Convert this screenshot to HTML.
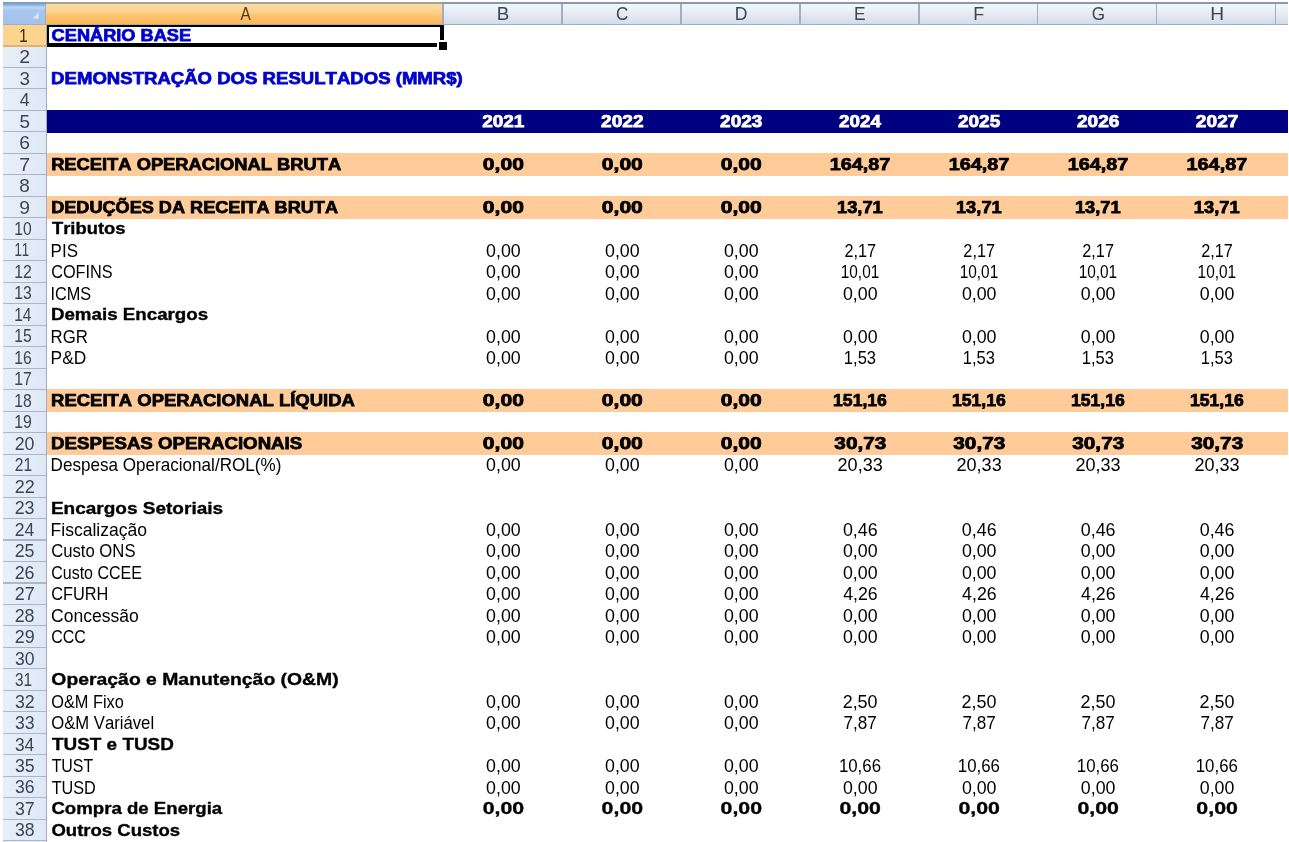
<!DOCTYPE html>
<html><head><meta charset="utf-8"><title>Planilha</title>
<style>
html,body{margin:0;padding:0;background:#fff;}
body{width:1289px;height:842px;position:relative;overflow:hidden;font-family:"Liberation Sans",sans-serif;}
.a{position:absolute;}
svg{position:absolute;left:0;top:0;}
text{font-family:"Liberation Sans",sans-serif;font-kerning:none;}
.B{font-weight:700;}
</style></head><body>

<div class="a" style="left:2.5px;top:1.8px;width:1285.5px;height:23.2px;background:#a3adc0"></div>
<div class="a" style="left:2.5px;top:1.8px;width:1285.5px;height:1.9px;background:#8799ab"></div>
<div class="a" style="left:2.8px;top:2.6px;width:42.7px;height:21px;background:linear-gradient(#6f9bd2 0%,#8fb5e6 10%,#b9d6f6 20%,#a8c7ef 36%,#a3c2ec 100%)"></div>
<svg width="1289" height="30" style="z-index:3"><path d="M38.6 12.2 L38.6 18.4 L32.6 18.4 Z" fill="#dbe7f6"/></svg>
<div class="a" style="left:46.4px;top:3.6px;width:396.10px;height:20.2px;background:linear-gradient(#f9dcab 0%,#fbd08a 40%,#fcc270 60%,#fbb858 100%)"></div>
<div class="a" style="left:443.70px;top:3.6px;width:117.75px;height:20.2px;background:linear-gradient(#ecf9fe 0%,#ebf0f7 30%,#e3e7f0 60%,#d4dcea 100%)"></div>
<div class="a" style="left:562.65px;top:3.6px;width:117.75px;height:20.2px;background:linear-gradient(#ecf9fe 0%,#ebf0f7 30%,#e3e7f0 60%,#d4dcea 100%)"></div>
<div class="a" style="left:681.60px;top:3.6px;width:117.75px;height:20.2px;background:linear-gradient(#ecf9fe 0%,#ebf0f7 30%,#e3e7f0 60%,#d4dcea 100%)"></div>
<div class="a" style="left:800.55px;top:3.6px;width:117.75px;height:20.2px;background:linear-gradient(#ecf9fe 0%,#ebf0f7 30%,#e3e7f0 60%,#d4dcea 100%)"></div>
<div class="a" style="left:919.50px;top:3.6px;width:117.75px;height:20.2px;background:linear-gradient(#ecf9fe 0%,#ebf0f7 30%,#e3e7f0 60%,#d4dcea 100%)"></div>
<div class="a" style="left:1038.45px;top:3.6px;width:117.75px;height:20.2px;background:linear-gradient(#ecf9fe 0%,#ebf0f7 30%,#e3e7f0 60%,#d4dcea 100%)"></div>
<div class="a" style="left:1157.40px;top:3.6px;width:117.75px;height:20.2px;background:linear-gradient(#ecf9fe 0%,#ebf0f7 30%,#e3e7f0 60%,#d4dcea 100%)"></div>
<div class="a" style="left:1276.35px;top:3.6px;width:11.65px;height:20.2px;background:linear-gradient(#ecf9fe 0%,#ebf0f7 30%,#e3e7f0 60%,#d4dcea 100%)"></div>
<div class="a" style="left:46.4px;top:1.8px;width:396.10px;height:1.9px;background:#a7a292"></div>
<div class="a" style="left:2.5px;top:24.5px;width:44.6px;height:817.5px;background:#adb6c8"></div>
<div class="a" style="left:2.5px;top:25.05px;width:43.2px;height:20.38px;background:#fdd48e"></div>
<div class="a" style="left:2.5px;top:46.53px;width:43.2px;height:20.38px;background:linear-gradient(90deg,#e9eff9,#dfe8f6)"></div>
<div class="a" style="left:2.5px;top:68.01px;width:43.2px;height:20.38px;background:linear-gradient(90deg,#e9eff9,#dfe8f6)"></div>
<div class="a" style="left:2.5px;top:89.49px;width:43.2px;height:20.38px;background:linear-gradient(90deg,#e9eff9,#dfe8f6)"></div>
<div class="a" style="left:2.5px;top:110.97px;width:43.2px;height:20.38px;background:linear-gradient(90deg,#e9eff9,#dfe8f6)"></div>
<div class="a" style="left:2.5px;top:132.45px;width:43.2px;height:20.38px;background:linear-gradient(90deg,#e9eff9,#dfe8f6)"></div>
<div class="a" style="left:2.5px;top:153.93px;width:43.2px;height:20.38px;background:linear-gradient(90deg,#e9eff9,#dfe8f6)"></div>
<div class="a" style="left:2.5px;top:175.41px;width:43.2px;height:20.38px;background:linear-gradient(90deg,#e9eff9,#dfe8f6)"></div>
<div class="a" style="left:2.5px;top:196.89px;width:43.2px;height:20.38px;background:linear-gradient(90deg,#e9eff9,#dfe8f6)"></div>
<div class="a" style="left:2.5px;top:218.37px;width:43.2px;height:20.38px;background:linear-gradient(90deg,#e9eff9,#dfe8f6)"></div>
<div class="a" style="left:2.5px;top:239.85px;width:43.2px;height:20.38px;background:linear-gradient(90deg,#e9eff9,#dfe8f6)"></div>
<div class="a" style="left:2.5px;top:261.33px;width:43.2px;height:20.38px;background:linear-gradient(90deg,#e9eff9,#dfe8f6)"></div>
<div class="a" style="left:2.5px;top:282.81px;width:43.2px;height:20.38px;background:linear-gradient(90deg,#e9eff9,#dfe8f6)"></div>
<div class="a" style="left:2.5px;top:304.29px;width:43.2px;height:20.38px;background:linear-gradient(90deg,#e9eff9,#dfe8f6)"></div>
<div class="a" style="left:2.5px;top:325.77px;width:43.2px;height:20.38px;background:linear-gradient(90deg,#e9eff9,#dfe8f6)"></div>
<div class="a" style="left:2.5px;top:347.25px;width:43.2px;height:20.38px;background:linear-gradient(90deg,#e9eff9,#dfe8f6)"></div>
<div class="a" style="left:2.5px;top:368.73px;width:43.2px;height:20.38px;background:linear-gradient(90deg,#e9eff9,#dfe8f6)"></div>
<div class="a" style="left:2.5px;top:390.21px;width:43.2px;height:20.38px;background:linear-gradient(90deg,#e9eff9,#dfe8f6)"></div>
<div class="a" style="left:2.5px;top:411.69px;width:43.2px;height:20.38px;background:linear-gradient(90deg,#e9eff9,#dfe8f6)"></div>
<div class="a" style="left:2.5px;top:433.17px;width:43.2px;height:20.38px;background:linear-gradient(90deg,#e9eff9,#dfe8f6)"></div>
<div class="a" style="left:2.5px;top:454.65px;width:43.2px;height:20.38px;background:linear-gradient(90deg,#e9eff9,#dfe8f6)"></div>
<div class="a" style="left:2.5px;top:476.13px;width:43.2px;height:20.38px;background:linear-gradient(90deg,#e9eff9,#dfe8f6)"></div>
<div class="a" style="left:2.5px;top:497.61px;width:43.2px;height:20.38px;background:linear-gradient(90deg,#e9eff9,#dfe8f6)"></div>
<div class="a" style="left:2.5px;top:519.09px;width:43.2px;height:20.38px;background:linear-gradient(90deg,#e9eff9,#dfe8f6)"></div>
<div class="a" style="left:2.5px;top:540.57px;width:43.2px;height:20.38px;background:linear-gradient(90deg,#e9eff9,#dfe8f6)"></div>
<div class="a" style="left:2.5px;top:562.05px;width:43.2px;height:20.38px;background:linear-gradient(90deg,#e9eff9,#dfe8f6)"></div>
<div class="a" style="left:2.5px;top:583.53px;width:43.2px;height:20.38px;background:linear-gradient(90deg,#e9eff9,#dfe8f6)"></div>
<div class="a" style="left:2.5px;top:605.01px;width:43.2px;height:20.38px;background:linear-gradient(90deg,#e9eff9,#dfe8f6)"></div>
<div class="a" style="left:2.5px;top:626.49px;width:43.2px;height:20.38px;background:linear-gradient(90deg,#e9eff9,#dfe8f6)"></div>
<div class="a" style="left:2.5px;top:647.97px;width:43.2px;height:20.38px;background:linear-gradient(90deg,#e9eff9,#dfe8f6)"></div>
<div class="a" style="left:2.5px;top:669.45px;width:43.2px;height:20.38px;background:linear-gradient(90deg,#e9eff9,#dfe8f6)"></div>
<div class="a" style="left:2.5px;top:690.93px;width:43.2px;height:20.38px;background:linear-gradient(90deg,#e9eff9,#dfe8f6)"></div>
<div class="a" style="left:2.5px;top:712.41px;width:43.2px;height:20.38px;background:linear-gradient(90deg,#e9eff9,#dfe8f6)"></div>
<div class="a" style="left:2.5px;top:733.89px;width:43.2px;height:20.38px;background:linear-gradient(90deg,#e9eff9,#dfe8f6)"></div>
<div class="a" style="left:2.5px;top:755.37px;width:43.2px;height:20.38px;background:linear-gradient(90deg,#e9eff9,#dfe8f6)"></div>
<div class="a" style="left:2.5px;top:776.85px;width:43.2px;height:20.38px;background:linear-gradient(90deg,#e9eff9,#dfe8f6)"></div>
<div class="a" style="left:2.5px;top:798.33px;width:43.2px;height:20.38px;background:linear-gradient(90deg,#e9eff9,#dfe8f6)"></div>
<div class="a" style="left:2.5px;top:819.81px;width:43.2px;height:20.38px;background:linear-gradient(90deg,#e9eff9,#dfe8f6)"></div>
<div class="a" style="left:2.5px;top:841.29px;width:43.2px;height:20.38px;background:linear-gradient(90deg,#e9eff9,#dfe8f6)"></div>
<div class="a" style="left:45.5px;top:24.5px;width:1.5px;height:817.5px;background:#a3aab9"></div>
<div class="a" style="left:2.5px;top:45.43px;width:43.2px;height:1.1px;background:#e2b273"></div>
<div class="a" style="left:46.9px;top:109.52px;width:1243px;height:23.13px;background:#000080"></div>
<div class="a" style="left:46.9px;top:152.58px;width:1243px;height:23.08px;background:#ffcc99"></div>
<div class="a" style="left:46.9px;top:195.54px;width:1243px;height:23.08px;background:#ffcc99"></div>
<div class="a" style="left:46.9px;top:388.86px;width:1243px;height:23.08px;background:#ffcc99"></div>
<div class="a" style="left:46.9px;top:431.82px;width:1243px;height:23.08px;background:#ffcc99"></div>
<div class="a" style="left:47.2px;top:25.2px;width:391.00px;height:16.10px;border-style:solid;border-color:#000;border-width:2px 4.3px 4.0px 2.4px;background:#fff"></div>
<div class="a" style="left:436.8px;top:40.2px;width:12px;height:10px;background:#fff"></div>
<div class="a" style="left:438.8px;top:41.6px;width:8.4px;height:8.3px;background:#000"></div>
<div class="a" style="left:1287.6px;top:0;width:2px;height:842px;background:#fff;z-index:4"></div>
<svg width="1289" height="842" viewBox="0 0 1289 842" style="z-index:5;filter:blur(0.3px)">
<text x="240.57" y="19.90" font-size="17.9" fill="#4a3c12" textLength="10.26" lengthAdjust="spacingAndGlyphs">A</text>
<text x="496.83" y="19.90" font-size="17.9" fill="#3a4656" textLength="12.53" lengthAdjust="spacingAndGlyphs">B</text>
<text x="616.06" y="19.90" font-size="17.9" fill="#3a4656" textLength="12.32" lengthAdjust="spacingAndGlyphs">C</text>
<text x="734.63" y="19.90" font-size="17.9" fill="#3a4656" textLength="12.68" lengthAdjust="spacingAndGlyphs">D</text>
<text x="854.10" y="19.90" font-size="17.9" fill="#3a4656" textLength="11.57" lengthAdjust="spacingAndGlyphs">E</text>
<text x="973.30" y="19.90" font-size="17.9" fill="#3a4656" textLength="11.00" lengthAdjust="spacingAndGlyphs">F</text>
<text x="1091.66" y="19.90" font-size="17.9" fill="#3a4656" textLength="13.34" lengthAdjust="spacingAndGlyphs">G</text>
<text x="1210.15" y="19.90" font-size="17.9" fill="#3a4656" textLength="13.83" lengthAdjust="spacingAndGlyphs">H</text>
<text x="19.15" y="41.68" font-size="17.9" fill="#3a2a10" textLength="8.38" lengthAdjust="spacingAndGlyphs">1</text>
<text x="19.22" y="63.16" font-size="17.9" fill="#3a4656" textLength="10.87" lengthAdjust="spacingAndGlyphs">2</text>
<text x="19.49" y="84.64" font-size="17.9" fill="#3a4656" textLength="10.44" lengthAdjust="spacingAndGlyphs">3</text>
<text x="19.79" y="106.12" font-size="17.9" fill="#3a4656" textLength="9.82" lengthAdjust="spacingAndGlyphs">4</text>
<text x="19.45" y="127.60" font-size="17.9" fill="#3a4656" textLength="10.44" lengthAdjust="spacingAndGlyphs">5</text>
<text x="19.22" y="149.08" font-size="17.9" fill="#3a4656" textLength="10.73" lengthAdjust="spacingAndGlyphs">6</text>
<text x="19.20" y="170.56" font-size="17.9" fill="#3a4656" textLength="10.89" lengthAdjust="spacingAndGlyphs">7</text>
<text x="19.38" y="192.04" font-size="17.9" fill="#3a4656" textLength="10.55" lengthAdjust="spacingAndGlyphs">8</text>
<text x="19.30" y="213.52" font-size="17.9" fill="#3a4656" textLength="10.72" lengthAdjust="spacingAndGlyphs">9</text>
<text x="14.21" y="235.00" font-size="17.9" fill="#3a4656" textLength="17.40" lengthAdjust="spacingAndGlyphs">10</text>
<text x="14.39" y="256.48" font-size="17.9" fill="#3a4656" textLength="14.76" lengthAdjust="spacingAndGlyphs">11</text>
<text x="14.19" y="277.96" font-size="17.9" fill="#3a4656" textLength="17.60" lengthAdjust="spacingAndGlyphs">12</text>
<text x="14.20" y="299.44" font-size="17.9" fill="#3a4656" textLength="17.49" lengthAdjust="spacingAndGlyphs">13</text>
<text x="14.22" y="320.92" font-size="17.9" fill="#3a4656" textLength="17.23" lengthAdjust="spacingAndGlyphs">14</text>
<text x="14.20" y="342.40" font-size="17.9" fill="#3a4656" textLength="17.45" lengthAdjust="spacingAndGlyphs">15</text>
<text x="14.20" y="363.88" font-size="17.9" fill="#3a4656" textLength="17.49" lengthAdjust="spacingAndGlyphs">16</text>
<text x="14.19" y="385.36" font-size="17.9" fill="#3a4656" textLength="17.60" lengthAdjust="spacingAndGlyphs">17</text>
<text x="14.20" y="406.84" font-size="17.9" fill="#3a4656" textLength="17.48" lengthAdjust="spacingAndGlyphs">18</text>
<text x="14.20" y="428.32" font-size="17.9" fill="#3a4656" textLength="17.55" lengthAdjust="spacingAndGlyphs">19</text>
<text x="14.71" y="449.80" font-size="17.9" fill="#3a4656" textLength="19.79" lengthAdjust="spacingAndGlyphs">20</text>
<text x="14.82" y="471.28" font-size="17.9" fill="#3a4656" textLength="17.35" lengthAdjust="spacingAndGlyphs">21</text>
<text x="14.70" y="492.76" font-size="17.9" fill="#3a4656" textLength="20.01" lengthAdjust="spacingAndGlyphs">22</text>
<text x="14.70" y="514.24" font-size="17.9" fill="#3a4656" textLength="19.88" lengthAdjust="spacingAndGlyphs">23</text>
<text x="14.71" y="535.72" font-size="17.9" fill="#3a4656" textLength="19.60" lengthAdjust="spacingAndGlyphs">24</text>
<text x="14.70" y="557.20" font-size="17.9" fill="#3a4656" textLength="19.85" lengthAdjust="spacingAndGlyphs">25</text>
<text x="14.70" y="578.68" font-size="17.9" fill="#3a4656" textLength="19.88" lengthAdjust="spacingAndGlyphs">26</text>
<text x="14.70" y="600.16" font-size="17.9" fill="#3a4656" textLength="20.01" lengthAdjust="spacingAndGlyphs">27</text>
<text x="14.70" y="621.64" font-size="17.9" fill="#3a4656" textLength="19.88" lengthAdjust="spacingAndGlyphs">28</text>
<text x="14.70" y="643.12" font-size="17.9" fill="#3a4656" textLength="19.95" lengthAdjust="spacingAndGlyphs">29</text>
<text x="14.93" y="664.60" font-size="17.9" fill="#3a4656" textLength="19.56" lengthAdjust="spacingAndGlyphs">30</text>
<text x="15.01" y="686.08" font-size="17.9" fill="#3a4656" textLength="17.14" lengthAdjust="spacingAndGlyphs">31</text>
<text x="14.92" y="707.56" font-size="17.9" fill="#3a4656" textLength="19.77" lengthAdjust="spacingAndGlyphs">32</text>
<text x="14.93" y="729.04" font-size="17.9" fill="#3a4656" textLength="19.65" lengthAdjust="spacingAndGlyphs">33</text>
<text x="14.94" y="750.52" font-size="17.9" fill="#3a4656" textLength="19.37" lengthAdjust="spacingAndGlyphs">34</text>
<text x="14.93" y="772.00" font-size="17.9" fill="#3a4656" textLength="19.61" lengthAdjust="spacingAndGlyphs">35</text>
<text x="14.93" y="793.48" font-size="17.9" fill="#3a4656" textLength="19.65" lengthAdjust="spacingAndGlyphs">36</text>
<text x="14.92" y="814.96" font-size="17.9" fill="#3a4656" textLength="19.77" lengthAdjust="spacingAndGlyphs">37</text>
<text x="14.93" y="836.44" font-size="17.9" fill="#3a4656" textLength="19.64" lengthAdjust="spacingAndGlyphs">38</text>
<text x="51.63" y="41.18" font-size="16.5" class="B" fill="#0000cc" stroke="#0000cc" stroke-width="0.75" textLength="139.51" lengthAdjust="spacingAndGlyphs">CENÁRIO BASE</text>
<text x="51.13" y="84.14" font-size="16.5" class="B" fill="#0000cc" stroke="#0000cc" stroke-width="0.75" textLength="411.62" lengthAdjust="spacingAndGlyphs">DEMONSTRAÇÃO DOS RESULTADOS (MMR$)</text>
<text x="482.19" y="127.10" font-size="16.5" class="B" fill="#ffffff" stroke="#ffffff" stroke-width="0.75" textLength="42.24" lengthAdjust="spacingAndGlyphs">2021</text>
<text x="601.14" y="127.10" font-size="16.5" class="B" fill="#ffffff" stroke="#ffffff" stroke-width="0.75" textLength="42.48" lengthAdjust="spacingAndGlyphs">2022</text>
<text x="720.09" y="127.10" font-size="16.5" class="B" fill="#ffffff" stroke="#ffffff" stroke-width="0.75" textLength="42.40" lengthAdjust="spacingAndGlyphs">2023</text>
<text x="839.05" y="127.10" font-size="16.5" class="B" fill="#ffffff" stroke="#ffffff" stroke-width="0.75" textLength="41.80" lengthAdjust="spacingAndGlyphs">2024</text>
<text x="957.99" y="127.10" font-size="16.5" class="B" fill="#ffffff" stroke="#ffffff" stroke-width="0.75" textLength="42.24" lengthAdjust="spacingAndGlyphs">2025</text>
<text x="1076.94" y="127.10" font-size="16.5" class="B" fill="#ffffff" stroke="#ffffff" stroke-width="0.75" textLength="42.40" lengthAdjust="spacingAndGlyphs">2026</text>
<text x="1195.89" y="127.10" font-size="16.5" class="B" fill="#ffffff" stroke="#ffffff" stroke-width="0.75" textLength="42.55" lengthAdjust="spacingAndGlyphs">2027</text>
<text x="51.15" y="170.06" font-size="16.5" class="B" fill="#000" stroke="#000" stroke-width="0.75" textLength="290.06" lengthAdjust="spacingAndGlyphs">RECEITA OPERACIONAL BRUTA</text>
<text x="482.87" y="170.06" font-size="16.5" class="B" fill="#000" stroke="#000" stroke-width="0.75" textLength="41.05" lengthAdjust="spacingAndGlyphs">0,00</text>
<text x="601.82" y="170.06" font-size="16.5" class="B" fill="#000" stroke="#000" stroke-width="0.75" textLength="41.05" lengthAdjust="spacingAndGlyphs">0,00</text>
<text x="720.77" y="170.06" font-size="16.5" class="B" fill="#000" stroke="#000" stroke-width="0.75" textLength="41.05" lengthAdjust="spacingAndGlyphs">0,00</text>
<text x="829.75" y="170.06" font-size="16.5" class="B" fill="#000" stroke="#000" stroke-width="0.75" textLength="60.57" lengthAdjust="spacingAndGlyphs">164,87</text>
<text x="948.70" y="170.06" font-size="16.5" class="B" fill="#000" stroke="#000" stroke-width="0.75" textLength="60.57" lengthAdjust="spacingAndGlyphs">164,87</text>
<text x="1067.65" y="170.06" font-size="16.5" class="B" fill="#000" stroke="#000" stroke-width="0.75" textLength="60.57" lengthAdjust="spacingAndGlyphs">164,87</text>
<text x="1186.60" y="170.06" font-size="16.5" class="B" fill="#000" stroke="#000" stroke-width="0.75" textLength="60.57" lengthAdjust="spacingAndGlyphs">164,87</text>
<text x="51.16" y="213.02" font-size="16.5" class="B" fill="#000" stroke="#000" stroke-width="0.75" textLength="286.84" lengthAdjust="spacingAndGlyphs">DEDUÇÕES DA RECEITA BRUTA</text>
<text x="482.87" y="213.02" font-size="16.5" class="B" fill="#000" stroke="#000" stroke-width="0.75" textLength="41.05" lengthAdjust="spacingAndGlyphs">0,00</text>
<text x="601.82" y="213.02" font-size="16.5" class="B" fill="#000" stroke="#000" stroke-width="0.75" textLength="41.05" lengthAdjust="spacingAndGlyphs">0,00</text>
<text x="720.77" y="213.02" font-size="16.5" class="B" fill="#000" stroke="#000" stroke-width="0.75" textLength="41.05" lengthAdjust="spacingAndGlyphs">0,00</text>
<text x="837.00" y="213.02" font-size="16.5" class="B" fill="#000" stroke="#000" stroke-width="0.75" textLength="45.81" lengthAdjust="spacingAndGlyphs">13,71</text>
<text x="955.95" y="213.02" font-size="16.5" class="B" fill="#000" stroke="#000" stroke-width="0.75" textLength="45.81" lengthAdjust="spacingAndGlyphs">13,71</text>
<text x="1074.90" y="213.02" font-size="16.5" class="B" fill="#000" stroke="#000" stroke-width="0.75" textLength="45.81" lengthAdjust="spacingAndGlyphs">13,71</text>
<text x="1193.85" y="213.02" font-size="16.5" class="B" fill="#000" stroke="#000" stroke-width="0.75" textLength="45.81" lengthAdjust="spacingAndGlyphs">13,71</text>
<text x="51.97" y="234.40" font-size="16.9" class="B" fill="#000" stroke="#000" stroke-width="0.35" textLength="73.51" lengthAdjust="spacingAndGlyphs">Tributos</text>
<text x="50.61" y="256.58" font-size="18.1" fill="#000" textLength="27.37" lengthAdjust="spacingAndGlyphs">PIS</text>
<text x="486.08" y="256.58" font-size="18.1" fill="#000" textLength="34.59" lengthAdjust="spacingAndGlyphs">0,00</text>
<text x="605.03" y="256.58" font-size="18.1" fill="#000" textLength="34.59" lengthAdjust="spacingAndGlyphs">0,00</text>
<text x="723.98" y="256.58" font-size="18.1" fill="#000" textLength="34.59" lengthAdjust="spacingAndGlyphs">0,00</text>
<text x="844.41" y="256.58" font-size="18.1" fill="#000" textLength="31.63" lengthAdjust="spacingAndGlyphs">2,17</text>
<text x="963.36" y="256.58" font-size="18.1" fill="#000" textLength="31.63" lengthAdjust="spacingAndGlyphs">2,17</text>
<text x="1082.31" y="256.58" font-size="18.1" fill="#000" textLength="31.63" lengthAdjust="spacingAndGlyphs">2,17</text>
<text x="1201.26" y="256.58" font-size="18.1" fill="#000" textLength="31.63" lengthAdjust="spacingAndGlyphs">2,17</text>
<text x="51.17" y="278.06" font-size="18.1" fill="#000" textLength="61.58" lengthAdjust="spacingAndGlyphs">COFINS</text>
<text x="486.08" y="278.06" font-size="18.1" fill="#000" textLength="34.59" lengthAdjust="spacingAndGlyphs">0,00</text>
<text x="605.03" y="278.06" font-size="18.1" fill="#000" textLength="34.59" lengthAdjust="spacingAndGlyphs">0,00</text>
<text x="723.98" y="278.06" font-size="18.1" fill="#000" textLength="34.59" lengthAdjust="spacingAndGlyphs">0,00</text>
<text x="840.75" y="278.06" font-size="18.1" fill="#000" textLength="38.52" lengthAdjust="spacingAndGlyphs">10,01</text>
<text x="959.70" y="278.06" font-size="18.1" fill="#000" textLength="38.52" lengthAdjust="spacingAndGlyphs">10,01</text>
<text x="1078.65" y="278.06" font-size="18.1" fill="#000" textLength="38.52" lengthAdjust="spacingAndGlyphs">10,01</text>
<text x="1197.60" y="278.06" font-size="18.1" fill="#000" textLength="38.52" lengthAdjust="spacingAndGlyphs">10,01</text>
<text x="50.50" y="299.54" font-size="18.1" fill="#000" textLength="40.65" lengthAdjust="spacingAndGlyphs">ICMS</text>
<text x="486.08" y="299.54" font-size="18.1" fill="#000" textLength="34.59" lengthAdjust="spacingAndGlyphs">0,00</text>
<text x="605.03" y="299.54" font-size="18.1" fill="#000" textLength="34.59" lengthAdjust="spacingAndGlyphs">0,00</text>
<text x="723.98" y="299.54" font-size="18.1" fill="#000" textLength="34.59" lengthAdjust="spacingAndGlyphs">0,00</text>
<text x="842.93" y="299.54" font-size="18.1" fill="#000" textLength="34.59" lengthAdjust="spacingAndGlyphs">0,00</text>
<text x="961.88" y="299.54" font-size="18.1" fill="#000" textLength="34.59" lengthAdjust="spacingAndGlyphs">0,00</text>
<text x="1080.83" y="299.54" font-size="18.1" fill="#000" textLength="34.59" lengthAdjust="spacingAndGlyphs">0,00</text>
<text x="1199.78" y="299.54" font-size="18.1" fill="#000" textLength="34.59" lengthAdjust="spacingAndGlyphs">0,00</text>
<text x="50.92" y="320.32" font-size="16.9" class="B" fill="#000" stroke="#000" stroke-width="0.35" textLength="157.27" lengthAdjust="spacingAndGlyphs">Demais Encargos</text>
<text x="50.62" y="342.50" font-size="18.1" fill="#000" textLength="37.36" lengthAdjust="spacingAndGlyphs">RGR</text>
<text x="486.08" y="342.50" font-size="18.1" fill="#000" textLength="34.59" lengthAdjust="spacingAndGlyphs">0,00</text>
<text x="605.03" y="342.50" font-size="18.1" fill="#000" textLength="34.59" lengthAdjust="spacingAndGlyphs">0,00</text>
<text x="723.98" y="342.50" font-size="18.1" fill="#000" textLength="34.59" lengthAdjust="spacingAndGlyphs">0,00</text>
<text x="842.93" y="342.50" font-size="18.1" fill="#000" textLength="34.59" lengthAdjust="spacingAndGlyphs">0,00</text>
<text x="961.88" y="342.50" font-size="18.1" fill="#000" textLength="34.59" lengthAdjust="spacingAndGlyphs">0,00</text>
<text x="1080.83" y="342.50" font-size="18.1" fill="#000" textLength="34.59" lengthAdjust="spacingAndGlyphs">0,00</text>
<text x="1199.78" y="342.50" font-size="18.1" fill="#000" textLength="34.59" lengthAdjust="spacingAndGlyphs">0,00</text>
<text x="50.58" y="363.98" font-size="18.1" fill="#000" textLength="35.65" lengthAdjust="spacingAndGlyphs">P&amp;D</text>
<text x="486.08" y="363.98" font-size="18.1" fill="#000" textLength="34.59" lengthAdjust="spacingAndGlyphs">0,00</text>
<text x="605.03" y="363.98" font-size="18.1" fill="#000" textLength="34.59" lengthAdjust="spacingAndGlyphs">0,00</text>
<text x="723.98" y="363.98" font-size="18.1" fill="#000" textLength="34.59" lengthAdjust="spacingAndGlyphs">0,00</text>
<text x="843.87" y="363.98" font-size="18.1" fill="#000" textLength="32.19" lengthAdjust="spacingAndGlyphs">1,53</text>
<text x="962.82" y="363.98" font-size="18.1" fill="#000" textLength="32.19" lengthAdjust="spacingAndGlyphs">1,53</text>
<text x="1081.77" y="363.98" font-size="18.1" fill="#000" textLength="32.19" lengthAdjust="spacingAndGlyphs">1,53</text>
<text x="1200.72" y="363.98" font-size="18.1" fill="#000" textLength="32.19" lengthAdjust="spacingAndGlyphs">1,53</text>
<text x="51.14" y="406.34" font-size="16.5" class="B" fill="#000" stroke="#000" stroke-width="0.75" textLength="303.77" lengthAdjust="spacingAndGlyphs">RECEITA OPERACIONAL LÍQUIDA</text>
<text x="482.87" y="406.34" font-size="16.5" class="B" fill="#000" stroke="#000" stroke-width="0.75" textLength="41.05" lengthAdjust="spacingAndGlyphs">0,00</text>
<text x="601.82" y="406.34" font-size="16.5" class="B" fill="#000" stroke="#000" stroke-width="0.75" textLength="41.05" lengthAdjust="spacingAndGlyphs">0,00</text>
<text x="720.77" y="406.34" font-size="16.5" class="B" fill="#000" stroke="#000" stroke-width="0.75" textLength="41.05" lengthAdjust="spacingAndGlyphs">0,00</text>
<text x="833.09" y="406.34" font-size="16.5" class="B" fill="#000" stroke="#000" stroke-width="0.75" textLength="53.79" lengthAdjust="spacingAndGlyphs">151,16</text>
<text x="952.04" y="406.34" font-size="16.5" class="B" fill="#000" stroke="#000" stroke-width="0.75" textLength="53.79" lengthAdjust="spacingAndGlyphs">151,16</text>
<text x="1070.99" y="406.34" font-size="16.5" class="B" fill="#000" stroke="#000" stroke-width="0.75" textLength="53.79" lengthAdjust="spacingAndGlyphs">151,16</text>
<text x="1189.94" y="406.34" font-size="16.5" class="B" fill="#000" stroke="#000" stroke-width="0.75" textLength="53.79" lengthAdjust="spacingAndGlyphs">151,16</text>
<text x="51.13" y="449.30" font-size="16.5" class="B" fill="#000" stroke="#000" stroke-width="0.75" textLength="251.13" lengthAdjust="spacingAndGlyphs">DESPESAS OPERACIONAIS</text>
<text x="482.87" y="449.30" font-size="16.5" class="B" fill="#000" stroke="#000" stroke-width="0.75" textLength="41.05" lengthAdjust="spacingAndGlyphs">0,00</text>
<text x="601.82" y="449.30" font-size="16.5" class="B" fill="#000" stroke="#000" stroke-width="0.75" textLength="41.05" lengthAdjust="spacingAndGlyphs">0,00</text>
<text x="720.77" y="449.30" font-size="16.5" class="B" fill="#000" stroke="#000" stroke-width="0.75" textLength="41.05" lengthAdjust="spacingAndGlyphs">0,00</text>
<text x="834.32" y="449.30" font-size="16.5" class="B" fill="#000" stroke="#000" stroke-width="0.75" textLength="52.08" lengthAdjust="spacingAndGlyphs">30,73</text>
<text x="953.27" y="449.30" font-size="16.5" class="B" fill="#000" stroke="#000" stroke-width="0.75" textLength="52.08" lengthAdjust="spacingAndGlyphs">30,73</text>
<text x="1072.22" y="449.30" font-size="16.5" class="B" fill="#000" stroke="#000" stroke-width="0.75" textLength="52.08" lengthAdjust="spacingAndGlyphs">30,73</text>
<text x="1191.17" y="449.30" font-size="16.5" class="B" fill="#000" stroke="#000" stroke-width="0.75" textLength="52.08" lengthAdjust="spacingAndGlyphs">30,73</text>
<text x="50.60" y="471.38" font-size="18.1" fill="#000" textLength="230.76" lengthAdjust="spacingAndGlyphs">Despesa Operacional/ROL(%)</text>
<text x="486.08" y="471.38" font-size="18.1" fill="#000" textLength="34.59" lengthAdjust="spacingAndGlyphs">0,00</text>
<text x="605.03" y="471.38" font-size="18.1" fill="#000" textLength="34.59" lengthAdjust="spacingAndGlyphs">0,00</text>
<text x="723.98" y="471.38" font-size="18.1" fill="#000" textLength="34.59" lengthAdjust="spacingAndGlyphs">0,00</text>
<text x="837.57" y="471.38" font-size="18.1" fill="#000" textLength="45.20" lengthAdjust="spacingAndGlyphs">20,33</text>
<text x="956.52" y="471.38" font-size="18.1" fill="#000" textLength="45.20" lengthAdjust="spacingAndGlyphs">20,33</text>
<text x="1075.47" y="471.38" font-size="18.1" fill="#000" textLength="45.20" lengthAdjust="spacingAndGlyphs">20,33</text>
<text x="1194.42" y="471.38" font-size="18.1" fill="#000" textLength="45.20" lengthAdjust="spacingAndGlyphs">20,33</text>
<text x="50.90" y="513.64" font-size="16.9" class="B" fill="#000" stroke="#000" stroke-width="0.35" textLength="172.20" lengthAdjust="spacingAndGlyphs">Encargos Setoriais</text>
<text x="50.56" y="535.82" font-size="18.1" fill="#000" textLength="96.47" lengthAdjust="spacingAndGlyphs">Fiscalização</text>
<text x="486.08" y="535.82" font-size="18.1" fill="#000" textLength="34.59" lengthAdjust="spacingAndGlyphs">0,00</text>
<text x="605.03" y="535.82" font-size="18.1" fill="#000" textLength="34.59" lengthAdjust="spacingAndGlyphs">0,00</text>
<text x="723.98" y="535.82" font-size="18.1" fill="#000" textLength="34.59" lengthAdjust="spacingAndGlyphs">0,00</text>
<text x="842.88" y="535.82" font-size="18.1" fill="#000" textLength="34.78" lengthAdjust="spacingAndGlyphs">0,46</text>
<text x="961.83" y="535.82" font-size="18.1" fill="#000" textLength="34.78" lengthAdjust="spacingAndGlyphs">0,46</text>
<text x="1080.78" y="535.82" font-size="18.1" fill="#000" textLength="34.78" lengthAdjust="spacingAndGlyphs">0,46</text>
<text x="1199.73" y="535.82" font-size="18.1" fill="#000" textLength="34.78" lengthAdjust="spacingAndGlyphs">0,46</text>
<text x="51.15" y="557.30" font-size="18.1" fill="#000" textLength="84.41" lengthAdjust="spacingAndGlyphs">Custo ONS</text>
<text x="486.08" y="557.30" font-size="18.1" fill="#000" textLength="34.59" lengthAdjust="spacingAndGlyphs">0,00</text>
<text x="605.03" y="557.30" font-size="18.1" fill="#000" textLength="34.59" lengthAdjust="spacingAndGlyphs">0,00</text>
<text x="723.98" y="557.30" font-size="18.1" fill="#000" textLength="34.59" lengthAdjust="spacingAndGlyphs">0,00</text>
<text x="842.93" y="557.30" font-size="18.1" fill="#000" textLength="34.59" lengthAdjust="spacingAndGlyphs">0,00</text>
<text x="961.88" y="557.30" font-size="18.1" fill="#000" textLength="34.59" lengthAdjust="spacingAndGlyphs">0,00</text>
<text x="1080.83" y="557.30" font-size="18.1" fill="#000" textLength="34.59" lengthAdjust="spacingAndGlyphs">0,00</text>
<text x="1199.78" y="557.30" font-size="18.1" fill="#000" textLength="34.59" lengthAdjust="spacingAndGlyphs">0,00</text>
<text x="51.19" y="578.78" font-size="18.1" fill="#000" textLength="90.80" lengthAdjust="spacingAndGlyphs">Custo CCEE</text>
<text x="486.08" y="578.78" font-size="18.1" fill="#000" textLength="34.59" lengthAdjust="spacingAndGlyphs">0,00</text>
<text x="605.03" y="578.78" font-size="18.1" fill="#000" textLength="34.59" lengthAdjust="spacingAndGlyphs">0,00</text>
<text x="723.98" y="578.78" font-size="18.1" fill="#000" textLength="34.59" lengthAdjust="spacingAndGlyphs">0,00</text>
<text x="842.93" y="578.78" font-size="18.1" fill="#000" textLength="34.59" lengthAdjust="spacingAndGlyphs">0,00</text>
<text x="961.88" y="578.78" font-size="18.1" fill="#000" textLength="34.59" lengthAdjust="spacingAndGlyphs">0,00</text>
<text x="1080.83" y="578.78" font-size="18.1" fill="#000" textLength="34.59" lengthAdjust="spacingAndGlyphs">0,00</text>
<text x="1199.78" y="578.78" font-size="18.1" fill="#000" textLength="34.59" lengthAdjust="spacingAndGlyphs">0,00</text>
<text x="51.17" y="600.26" font-size="18.1" fill="#000" textLength="57.16" lengthAdjust="spacingAndGlyphs">CFURH</text>
<text x="486.08" y="600.26" font-size="18.1" fill="#000" textLength="34.59" lengthAdjust="spacingAndGlyphs">0,00</text>
<text x="605.03" y="600.26" font-size="18.1" fill="#000" textLength="34.59" lengthAdjust="spacingAndGlyphs">0,00</text>
<text x="723.98" y="600.26" font-size="18.1" fill="#000" textLength="34.59" lengthAdjust="spacingAndGlyphs">0,00</text>
<text x="843.17" y="600.26" font-size="18.1" fill="#000" textLength="34.49" lengthAdjust="spacingAndGlyphs">4,26</text>
<text x="962.12" y="600.26" font-size="18.1" fill="#000" textLength="34.49" lengthAdjust="spacingAndGlyphs">4,26</text>
<text x="1081.07" y="600.26" font-size="18.1" fill="#000" textLength="34.49" lengthAdjust="spacingAndGlyphs">4,26</text>
<text x="1200.02" y="600.26" font-size="18.1" fill="#000" textLength="34.49" lengthAdjust="spacingAndGlyphs">4,26</text>
<text x="51.11" y="621.74" font-size="18.1" fill="#000" textLength="87.73" lengthAdjust="spacingAndGlyphs">Concessão</text>
<text x="486.08" y="621.74" font-size="18.1" fill="#000" textLength="34.59" lengthAdjust="spacingAndGlyphs">0,00</text>
<text x="605.03" y="621.74" font-size="18.1" fill="#000" textLength="34.59" lengthAdjust="spacingAndGlyphs">0,00</text>
<text x="723.98" y="621.74" font-size="18.1" fill="#000" textLength="34.59" lengthAdjust="spacingAndGlyphs">0,00</text>
<text x="842.93" y="621.74" font-size="18.1" fill="#000" textLength="34.59" lengthAdjust="spacingAndGlyphs">0,00</text>
<text x="961.88" y="621.74" font-size="18.1" fill="#000" textLength="34.59" lengthAdjust="spacingAndGlyphs">0,00</text>
<text x="1080.83" y="621.74" font-size="18.1" fill="#000" textLength="34.59" lengthAdjust="spacingAndGlyphs">0,00</text>
<text x="1199.78" y="621.74" font-size="18.1" fill="#000" textLength="34.59" lengthAdjust="spacingAndGlyphs">0,00</text>
<text x="51.19" y="643.22" font-size="18.1" fill="#000" textLength="34.62" lengthAdjust="spacingAndGlyphs">CCC</text>
<text x="486.08" y="643.22" font-size="18.1" fill="#000" textLength="34.59" lengthAdjust="spacingAndGlyphs">0,00</text>
<text x="605.03" y="643.22" font-size="18.1" fill="#000" textLength="34.59" lengthAdjust="spacingAndGlyphs">0,00</text>
<text x="723.98" y="643.22" font-size="18.1" fill="#000" textLength="34.59" lengthAdjust="spacingAndGlyphs">0,00</text>
<text x="842.93" y="643.22" font-size="18.1" fill="#000" textLength="34.59" lengthAdjust="spacingAndGlyphs">0,00</text>
<text x="961.88" y="643.22" font-size="18.1" fill="#000" textLength="34.59" lengthAdjust="spacingAndGlyphs">0,00</text>
<text x="1080.83" y="643.22" font-size="18.1" fill="#000" textLength="34.59" lengthAdjust="spacingAndGlyphs">0,00</text>
<text x="1199.78" y="643.22" font-size="18.1" fill="#000" textLength="34.59" lengthAdjust="spacingAndGlyphs">0,00</text>
<text x="51.38" y="685.48" font-size="16.9" class="B" fill="#000" stroke="#000" stroke-width="0.35" textLength="287.31" lengthAdjust="spacingAndGlyphs">Operação e Manutenção (O&amp;M)</text>
<text x="51.23" y="707.66" font-size="18.1" fill="#000" textLength="72.66" lengthAdjust="spacingAndGlyphs">O&amp;M Fixo</text>
<text x="486.08" y="707.66" font-size="18.1" fill="#000" textLength="34.59" lengthAdjust="spacingAndGlyphs">0,00</text>
<text x="605.03" y="707.66" font-size="18.1" fill="#000" textLength="34.59" lengthAdjust="spacingAndGlyphs">0,00</text>
<text x="723.98" y="707.66" font-size="18.1" fill="#000" textLength="34.59" lengthAdjust="spacingAndGlyphs">0,00</text>
<text x="842.67" y="707.66" font-size="18.1" fill="#000" textLength="34.90" lengthAdjust="spacingAndGlyphs">2,50</text>
<text x="961.62" y="707.66" font-size="18.1" fill="#000" textLength="34.90" lengthAdjust="spacingAndGlyphs">2,50</text>
<text x="1080.57" y="707.66" font-size="18.1" fill="#000" textLength="34.90" lengthAdjust="spacingAndGlyphs">2,50</text>
<text x="1199.52" y="707.66" font-size="18.1" fill="#000" textLength="34.90" lengthAdjust="spacingAndGlyphs">2,50</text>
<text x="51.21" y="729.14" font-size="18.1" fill="#000" textLength="102.91" lengthAdjust="spacingAndGlyphs">O&amp;M Variável</text>
<text x="486.08" y="729.14" font-size="18.1" fill="#000" textLength="34.59" lengthAdjust="spacingAndGlyphs">0,00</text>
<text x="605.03" y="729.14" font-size="18.1" fill="#000" textLength="34.59" lengthAdjust="spacingAndGlyphs">0,00</text>
<text x="723.98" y="729.14" font-size="18.1" fill="#000" textLength="34.59" lengthAdjust="spacingAndGlyphs">0,00</text>
<text x="843.55" y="729.14" font-size="18.1" fill="#000" textLength="33.34" lengthAdjust="spacingAndGlyphs">7,87</text>
<text x="962.50" y="729.14" font-size="18.1" fill="#000" textLength="33.34" lengthAdjust="spacingAndGlyphs">7,87</text>
<text x="1081.45" y="729.14" font-size="18.1" fill="#000" textLength="33.34" lengthAdjust="spacingAndGlyphs">7,87</text>
<text x="1200.40" y="729.14" font-size="18.1" fill="#000" textLength="33.34" lengthAdjust="spacingAndGlyphs">7,87</text>
<text x="51.96" y="749.92" font-size="16.9" class="B" fill="#000" stroke="#000" stroke-width="0.35" textLength="121.96" lengthAdjust="spacingAndGlyphs">TUST e TUSD</text>
<text x="51.64" y="772.10" font-size="18.1" fill="#000" textLength="41.62" lengthAdjust="spacingAndGlyphs">TUST</text>
<text x="486.08" y="772.10" font-size="18.1" fill="#000" textLength="34.59" lengthAdjust="spacingAndGlyphs">0,00</text>
<text x="605.03" y="772.10" font-size="18.1" fill="#000" textLength="34.59" lengthAdjust="spacingAndGlyphs">0,00</text>
<text x="723.98" y="772.10" font-size="18.1" fill="#000" textLength="34.59" lengthAdjust="spacingAndGlyphs">0,00</text>
<text x="838.89" y="772.10" font-size="18.1" fill="#000" textLength="42.12" lengthAdjust="spacingAndGlyphs">10,66</text>
<text x="957.84" y="772.10" font-size="18.1" fill="#000" textLength="42.12" lengthAdjust="spacingAndGlyphs">10,66</text>
<text x="1076.79" y="772.10" font-size="18.1" fill="#000" textLength="42.12" lengthAdjust="spacingAndGlyphs">10,66</text>
<text x="1195.74" y="772.10" font-size="18.1" fill="#000" textLength="42.12" lengthAdjust="spacingAndGlyphs">10,66</text>
<text x="51.63" y="793.58" font-size="18.1" fill="#000" textLength="44.24" lengthAdjust="spacingAndGlyphs">TUSD</text>
<text x="486.08" y="793.58" font-size="18.1" fill="#000" textLength="34.59" lengthAdjust="spacingAndGlyphs">0,00</text>
<text x="605.03" y="793.58" font-size="18.1" fill="#000" textLength="34.59" lengthAdjust="spacingAndGlyphs">0,00</text>
<text x="723.98" y="793.58" font-size="18.1" fill="#000" textLength="34.59" lengthAdjust="spacingAndGlyphs">0,00</text>
<text x="842.93" y="793.58" font-size="18.1" fill="#000" textLength="34.59" lengthAdjust="spacingAndGlyphs">0,00</text>
<text x="961.88" y="793.58" font-size="18.1" fill="#000" textLength="34.59" lengthAdjust="spacingAndGlyphs">0,00</text>
<text x="1080.83" y="793.58" font-size="18.1" fill="#000" textLength="34.59" lengthAdjust="spacingAndGlyphs">0,00</text>
<text x="1199.78" y="793.58" font-size="18.1" fill="#000" textLength="34.59" lengthAdjust="spacingAndGlyphs">0,00</text>
<text x="51.41" y="814.36" font-size="16.9" class="B" fill="#000" stroke="#000" stroke-width="0.35" textLength="170.80" lengthAdjust="spacingAndGlyphs">Compra de Energia</text>
<text x="482.66" y="814.36" font-size="16.9" class="B" fill="#000" stroke="#000" stroke-width="0.35" textLength="41.47" lengthAdjust="spacingAndGlyphs">0,00</text>
<text x="601.61" y="814.36" font-size="16.9" class="B" fill="#000" stroke="#000" stroke-width="0.35" textLength="41.47" lengthAdjust="spacingAndGlyphs">0,00</text>
<text x="720.56" y="814.36" font-size="16.9" class="B" fill="#000" stroke="#000" stroke-width="0.35" textLength="41.47" lengthAdjust="spacingAndGlyphs">0,00</text>
<text x="839.51" y="814.36" font-size="16.9" class="B" fill="#000" stroke="#000" stroke-width="0.35" textLength="41.47" lengthAdjust="spacingAndGlyphs">0,00</text>
<text x="958.46" y="814.36" font-size="16.9" class="B" fill="#000" stroke="#000" stroke-width="0.35" textLength="41.47" lengthAdjust="spacingAndGlyphs">0,00</text>
<text x="1077.41" y="814.36" font-size="16.9" class="B" fill="#000" stroke="#000" stroke-width="0.35" textLength="41.47" lengthAdjust="spacingAndGlyphs">0,00</text>
<text x="1196.36" y="814.36" font-size="16.9" class="B" fill="#000" stroke="#000" stroke-width="0.35" textLength="41.47" lengthAdjust="spacingAndGlyphs">0,00</text>
<text x="51.42" y="835.84" font-size="16.9" class="B" fill="#000" stroke="#000" stroke-width="0.35" textLength="128.67" lengthAdjust="spacingAndGlyphs">Outros Custos</text>
</svg>
</body></html>
